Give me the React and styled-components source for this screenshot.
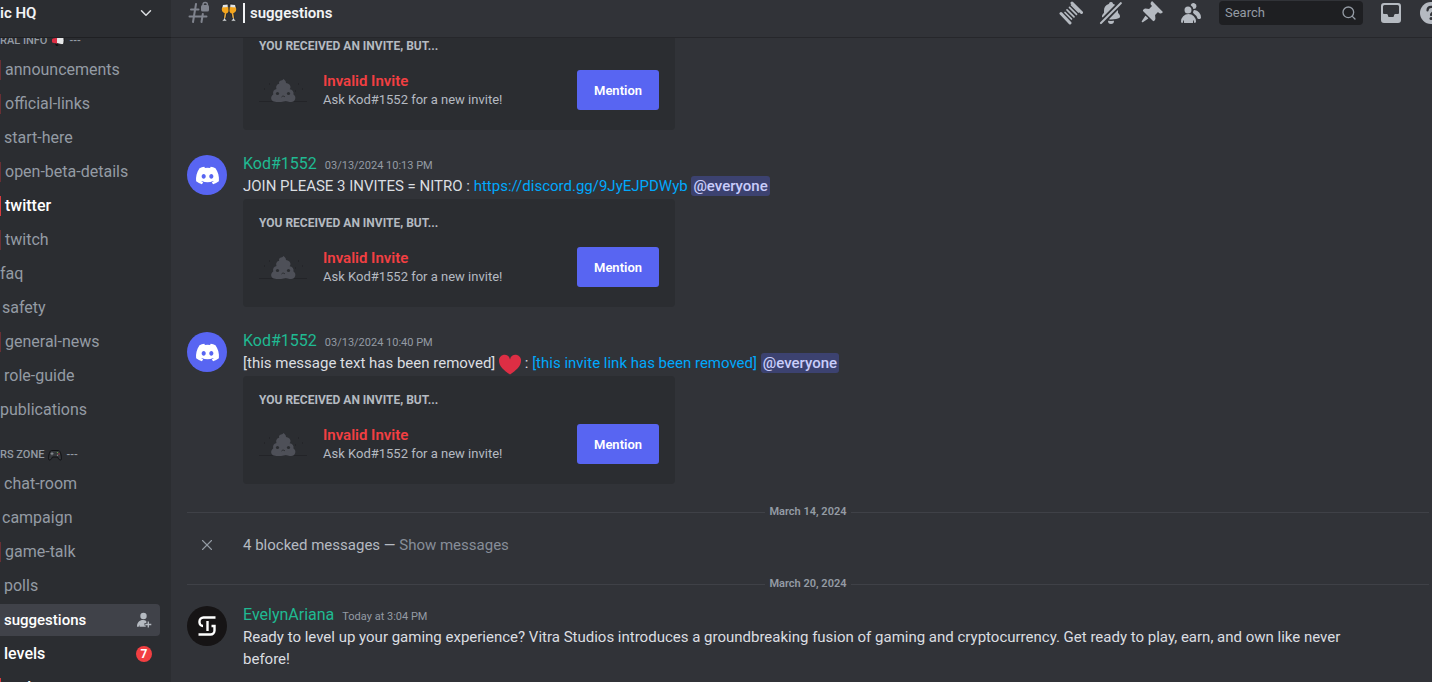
import React from 'react'
import styled, { createGlobalStyle } from 'styled-components'
import { ChevronDown, Search, X } from 'lucide-react'
import { FaDiscord } from 'react-icons/fa'

const GlobalStyle = createGlobalStyle`
    * {
        box-sizing: border-box;
    }
    body {
        margin: 0;
        background: #313338;
        color: #dbdee1;
        font-family: Roboto, 'Noto Sans', sans-serif;
        font-size: 15px;
        line-height: 22px;
        overflow: hidden;
    }
    button, input {
        font-family: inherit;
    }
`

const Page = styled.div`
    display: flex;
    height: 100vh;
    overflow: hidden;
`

const Sidebar = styled.nav`
    flex: 0 0 171px;
    display: flex;
    flex-direction: column;
    overflow: hidden;
    background: #2b2d31;
`

const ServerButton = styled.button`
    display: flex;
    align-items: center;
    justify-content: space-between;
    flex: 0 0 38px;
    padding: 0 16px 12px 0;
    border: 0;
    border-bottom: 1px solid #1f2023;
    background: transparent;
    color: #f2f3f5;
    font-size: 15px;
    font-weight: 600;
`

const ChannelScroll = styled.div`
    flex: 1;
    min-height: 0;
    overflow: hidden;
`

const Category = styled.h2`
    display: flex;
    align-items: center;
    gap: 4px;
    height: 18px;
    margin: ${(props) => (props.$first ? '-6px' : '20px')} 0 4px;
    color: #949ba4;
    font-size: 11px;
    font-weight: 500;
    white-space: nowrap;
`

const Channel = styled.a`
    display: flex;
    align-items: center;
    justify-content: space-between;
    height: 32px;
    margin: 0 11px 2px 0;
    padding-right: 8px;
    border-radius: 0 4px 4px 0;
    background: ${(props) => (props.$active ? '#404249' : 'transparent')};
    color: ${(props) => (props.$active || props.$unread ? '#ffffff' : '#949ba4')};
    font-size: ${(props) => (props.$active ? '15px' : '16px')};
    font-weight: ${(props) => (props.$active || props.$unread ? 500 : 400)};
    text-decoration: none;
`

const ChannelName = styled.span`
    padding-left: ${(props) => props.$lead}px;
    border-left: ${(props) => (props.$bar ? `1px solid ${props.$bar}` : '0')};
    line-height: 20px;
`

const Count = styled.span`
    width: 16px;
    height: 16px;
    border-radius: 8px;
    background: #f23f42;
    color: #ffffff;
    font-size: 12px;
    font-weight: 700;
    line-height: 16px;
    text-align: center;
`

const Main = styled.main`
    flex: 1;
    min-width: 0;
    display: flex;
    flex-direction: column;
    overflow: hidden;
`

const Header = styled.header`
    display: flex;
    align-items: center;
    flex: 0 0 38px;
    padding: 0 0 12px 16px;
    border-bottom: 1px solid #26272b;
`

const Title = styled.h1`
    display: flex;
    align-items: center;
    flex: 1;
    gap: 5px;
    margin: 0 0 0 9px;
    color: #f2f3f5;
    font-size: 15px;
    font-weight: 600;
`

const TitleBar = styled.span`
    width: 2px;
    height: 20px;
    background: #f2f3f5;
`

const Toolbar = styled.div`
    display: flex;
    align-items: center;
    gap: 16px;
    margin-right: -11px;
    color: #b5bac1;
`

const IconButton = styled.button`
    display: flex;
    width: 24px;
    height: 24px;
    padding: 0;
    border: 0;
    background: transparent;
    color: inherit;
`

const SearchBox = styled.label`
    display: flex;
    align-items: center;
    width: 144px;
    height: 24px;
    padding: 0 6px;
    border-radius: 4px;
    background: #1e1f22;
    color: #949ba4;
`

const SearchInput = styled.input`
    flex: 1;
    min-width: 0;
    padding: 0;
    border: 0;
    outline: 0;
    background: transparent;
    color: #dbdee1;
    font-size: 13px;
    &::placeholder {
        color: #949ba4;
        opacity: 1;
    }
`

const Messages = styled.div`
    flex: 1;
    min-height: 0;
    overflow: hidden;
    padding: 0 3px 0 16px;
`

const Message = styled.article`
    display: flex;
    gap: 16px;
    margin-top: ${(props) => props.$top}px;
    padding-right: 48px;
`

const Avatar = styled.div`
    display: flex;
    align-items: center;
    justify-content: center;
    flex: 0 0 40px;
    height: 40px;
    margin-top: 2px;
    border-radius: 50%;
    background: ${(props) => props.$color || 'transparent'};
    color: #ffffff;
`

const Body = styled.div`
    flex: 1;
    min-width: 0;
`

const Meta = styled.div`
    display: flex;
    align-items: baseline;
    gap: 8px;
`

const Author = styled.span`
    color: #1fba92;
    font-size: 16px;
`

const Time = styled.time`
    color: #949ba4;
    font-size: 11px;
    line-height: 16px;
`

const Text = styled.p`
    margin: 0;
`

const Link = styled.a`
    color: #00a8fc;
    text-decoration: none;
`

const Mention = styled.span`
    padding: 1px 2px;
    border-radius: 3px;
    background: #3c4270;
    color: #c9cdfb;
    font-weight: 500;
`

const Card = styled.section`
    max-width: 432px;
    margin-top: 2px;
    padding: 16px;
    border-radius: 4px;
    background: #2b2d31;
`

const CardHeading = styled.h3`
    margin: 0 0 12px;
    color: #b5bac1;
    font-size: 12px;
    font-weight: 700;
    line-height: 16px;
`

const CardRow = styled.div`
    display: flex;
    align-items: center;
    gap: 16px;
`

const CardText = styled.div`
    flex: 1;
    color: #b5bac1;
    font-size: 13px;
    line-height: 18px;
`

const Invalid = styled.div`
    color: #f23f42;
    font-size: 15px;
    font-weight: 600;
    line-height: 20px;
`

const MentionButton = styled.button`
    width: 82px;
    height: 40px;
    padding: 0;
    border: 0;
    border-radius: 3px;
    background: #5865f2;
    color: #ffffff;
    font-size: 13px;
    font-weight: 600;
`

const Divider = styled.div`
    display: flex;
    align-items: center;
    gap: 4px;
    margin-top: 21px;
    color: #949ba4;
    font-size: 11px;
    font-weight: 600;
    line-height: 14px;
    &::before, &::after {
        content: '';
        flex: 1;
        height: 1px;
        background: #3f4147;
    }
`

const Blocked = styled.div`
    display: flex;
    align-items: center;
    gap: 16px;
    margin-top: 15px;
    color: #b5bac1;
`

const BlockedIcon = styled.span`
    display: flex;
    justify-content: center;
    flex: 0 0 40px;
    color: #949ba4;
`

const ShowButton = styled.button`
    padding: 0;
    border: 0;
    background: transparent;
    color: #878e98;
    font-size: 15px;
`

const InlineHeart = styled.svg`
    margin: -2px 0;
    vertical-align: -6px;
`

const Megaphone = () => (
    <svg width="14" height="12" viewBox="0 0 14 12">
        <path d="M4 3.500L11 .8c1.500 0 2 2 2 4.700s-.5 4.200-2 4.200L4 8z" fill="#e6e7e8" stroke="#111214" strokeWidth=".8" />
        <path d="M1 4.800Q1 3.800 2 3.600L6 2.700v6L2 7.800Q1 7.600 1 6.800z" fill="#dd2e44" />
        <path d="M4 8.500l1 2.600h2.500L6.500 9" fill="#111214" />
    </svg>
)

const Gamepad = () => (
    <svg width="14" height="12" viewBox="0 0 14 12">
        <path d="M3.500 1.500h7c2 0 3 6 3 8 0 2-2 2-3 .2L9.500 8h-5l-1 1.700C2.500 11.500.5 11.500.5 9.500c0-2 1-8 3-8z" fill="#34373b" stroke="#101113" />
        <path d="M4 3.200v3M2.500 4.700h3" stroke="#8b9096" />
        <circle cx="9.500" cy="3.600" r=".7" fill="#77b255" />
        <circle cx="11" cy="5" r=".7" fill="#be3b45" />
        <circle cx="9.500" cy="6.200" r=".7" fill="#8b9096" />
    </svg>
)

const Glasses = () => (
    <svg width="18" height="20" viewBox="0 0 18 20">
        <path d="M2.500 1.500L8 1l.5 6c0 2-1 3-2.200 3.400L5.500 16l2 2.200h-6l2.300-2.400L4.700 10C3 9.500 1.500 8 1.700 6z" fill="#dfe3e6" stroke="#17181a" strokeWidth=".8" />
        <path d="M2 4.500L8.200 4l.3 3.500c0 1.800-1 2.800-2.500 3L5.200 15h-1l.5-5C3 9.500 1.800 8.500 1.800 6.500z" fill="#f4a51c" />
        <path d="M15.500 1.500L10 1l-.5 6c0 2 1 3 2.200 3.400l.8 5.600-2 2.200h6l-2.300-2.400-.9-5.800c1.700-.5 3.200-2 3-4z" fill="#dfe3e6" stroke="#17181a" strokeWidth=".8" />
        <path d="M16 4.500L9.800 4l-.3 3.500c0 1.800 1 2.800 2.500 3l.8 4.500h1l-.5-5c1.700-.5 2.900-1.500 2.900-3.500z" fill="#f4a51c" />
    </svg>
)

const HashLock = () => (
    <svg width="24" height="24" viewBox="0 0 24 24" fill="none" stroke="#80848e" strokeWidth="2" strokeLinecap="round">
        <path d="M9 3L6 21M15.800 13L14.500 21M4 8.500h7.500M2.500 15.500h17" />
        <path d="M16 5V3.800a2.200 2.200 0 0 1 4.400 0V5" strokeWidth="1.500" />
        <rect x="14" y="4" width="8" height="6.500" rx="1.500" fill="#80848e" stroke="none" />
    </svg>
)

const ThreadsIcon = () => (
    <svg width="24" height="24" viewBox="0 0 24 24" fill="none" stroke="currentColor" strokeLinecap="round">
        <path d="M2 12.500L11 22M13 2l9.500 9.500" strokeWidth="3" />
        <path d="M6 11.500l6.500 6.500M8 8.800l7 7M10.500 6.300l7 7M12.500 4l7 7" strokeWidth="1.700" />
    </svg>
)

const BellOffIcon = () => (
    <svg width="24" height="24" viewBox="0 0 24 24" fill="currentColor">
        <path d="M1.3 21.3a1 1 0 1 0 1.4 1.4l20-20a1 1 0 0 0-1.4-1.4l-20 20ZM3.13 16.13c.11.27.46.28.66.08L15.73 4.27a.47.47 0 0 0-.07-.74 6.97 6.97 0 0 0-1.35-.64.62.62 0 0 1-.38-.43 2 2 0 0 0-3.86 0 .62.62 0 0 1-.38.43A7 7 0 0 0 5 9.5v2.09a.5.5 0 0 1-.13.33l-1.1 1.22A3 3 0 0 0 3 15.15v.28c0 .24.04.48.13.7ZM18.64 9.36c.13-.13.36-.05.36.14v2.09c0 .12.05.24.13.33l1.1 1.22a3 3 0 0 1 .77 2.01v.28c0 .67-.34 1.29-.95 1.56-1.31.6-4 1.51-8.05 1.51-.46 0-.9-.01-1.33-.03a.48.48 0 0 1-.3-.83l8.27-8.28ZM9.18 19.84A.16.16 0 0 0 9 20a3 3 0 1 0 6 0c0-.1-.09-.17-.18-.16a24.84 24.84 0 0 1-5.64 0Z" />
    </svg>
)

const PinIcon = () => (
    <svg width="24" height="24" viewBox="0 0 24 24" fill="currentColor">
        <path d="M19.38 11.38a3 3 0 0 0 4.24 0l.03-.03a.5.5 0 0 0 0-.7L13.35.35a.5.5 0 0 0-.7 0l-.03.03a3 3 0 0 0 0 4.24L13 5l-2.92 2.92-3.65-.34a2 2 0 0 0-1.6.58l-.62.63a1 1 0 0 0 0 1.42l9.58 9.58a1 1 0 0 0 1.42 0l.63-.63a2 2 0 0 0 .58-1.6l-.34-3.64L19 11l.38.38ZM9.07 17.07a.5.5 0 0 1-.08.77l-5.15 3.43a.5.5 0 0 1-.63-.06l-.42-.42a.5.5 0 0 1-.06-.63L6.16 15a.5.5 0 0 1 .77-.08l2.14 2.14Z" />
    </svg>
)

const MembersIcon = () => (
    <svg width="24" height="24" viewBox="0 0 24 24" fill="currentColor">
        <path d="M14.5 8a3 3 0 1 0-2.7-4.3c-.2.4.06.86.44 1.12a5 5 0 0 1 2.14 3.08c.01.06.06.1.12.1ZM18.44 17.27c.15.43.54.73 1 .73h1.06c.83 0 1.5-.67 1.5-1.5a7.5 7.5 0 0 0-6.5-7.43c-.55-.08-.99.38-1.1.92-.06.3-.15.6-.26.87-.23.58-.05 1.3.47 1.63a9.53 9.53 0 0 1 3.83 4.78ZM12.5 9a3.5 3.5 0 1 1-7 0 3.5 3.5 0 0 1 7 0ZM2 20.5a7.5 7.5 0 0 1 15 0c0 .83-.67 1.5-1.5 1.5a.2.2 0 0 1-.2-.16c-.2-.96-.56-1.87-.88-2.54-.1-.23-.42-.15-.42.1v2.1a.5.5 0 0 1-.5.5h-8a.5.5 0 0 1-.5-.5v-2.1c0-.25-.31-.33-.42-.1-.32.67-.67 1.58-.88 2.54a.2.2 0 0 1-.2.16A1.5 1.5 0 0 1 2 20.5Z" />
    </svg>
)

const InboxIcon = () => (
    <svg width="24" height="24" viewBox="0 0 24 24" fill="currentColor">
        <path fillRule="evenodd" d="M5 2a3 3 0 0 0-3 3v14a3 3 0 0 0 3 3h14a3 3 0 0 0 3-3V5a3 3 0 0 0-3-3H5ZM4 5.500A1.500 1.500 0 0 1 5.500 4h13A1.500 1.500 0 0 1 20 5.500v6.500a1 1 0 0 1-1 1h-2.500c-.8 0-1.500.7-1.500 1.500 0 1-.7 1.500-1.500 1.500h-3C9.700 16 9 15.500 9 14.500 9 13.700 8.300 13 7.500 13H5a1 1 0 0 1-1-1V5.500Z" />
    </svg>
)

const HelpIcon = () => (
    <svg width="24" height="24" viewBox="0 0 24 24">
        <circle cx="12" cy="12" r="11" fill="currentColor" />
        <path d="M8.500 9.500c0-5 7-4.500 7-.5 0 2.500-3.500 2.500-3.500 5" fill="none" stroke="#313338" strokeWidth="2.200" strokeLinecap="round" />
        <circle cx="12" cy="17.500" r="1.500" fill="#313338" />
    </svg>
)

const AddPerson = () => (
    <svg width="16" height="16" viewBox="0 0 16 16" fill="#b5bac1">
        <circle cx="7.500" cy="4" r="3.200" />
        <path d="M1 14.500c0-4 2.500-6.500 6-6.500 1.300 0 2.400.3 3.300.9V11H8.500v2.500h1.200v1.200H3.500v-2l-.8 2H1z" />
        <path d="M12.300 9.500v6M9.300 12.500h6" stroke="#b5bac1" strokeWidth="1.300" />
    </svg>
)

const Poop = () => (
    <svg width="48" height="48" viewBox="0 0 48 48">
        <path d="M0 35.500h48" stroke="#232428" />
        <path d="M10 18h1M5 23h1M39 18h1M43 23h1M36 25h1" stroke="#1e1f22" />
        <path d="M22 14.500c1.500 0 2-.8 2.300-1.500 1.500 1 2.800 2 2.700 4 2.500.5 4.500 1.500 4.500 4 0 1-.3 1.600-.8 2.200 2.800.3 4.300 2.300 3.800 5.300 1.700 1 2.200 3 1.700 4.500-.5 2-2 3-4 3-2.500 0-3-.8-5.500-.8s-4 1-7 .8c-3 0-7 0-7.500-3.200-.3-2 .7-3.500 2-4.300-.5-3 .5-5 3.300-5.500-1-3 .7-4.700 2.700-5.200-.5-1.500 0-2.800 1.800-3.300z" fill="#4e5058" />
        <circle cx="18.500" cy="27.500" r="1.600" fill="#2b2d31" />
        <circle cx="29.500" cy="27.500" r="1.600" fill="#2b2d31" />
        <path d="M22.500 31c1-1.200 2.500-1.200 3.500 0" fill="none" stroke="#2b2d31" />
    </svg>
)

const StudioLogo = () => (
    <svg width="40" height="40" viewBox="0 0 40 40" fill="none" stroke="#ffffff" strokeWidth="2.400">
        <circle cx="20" cy="20" r="20" fill="#161415" stroke="none" />
        <path d="M28.500 11.500H16.500a4 4 0 0 0-4 4v1a3.500 3.500 0 0 0 3.500 3.500" />
        <path d="M11.500 28.500h12a4 4 0 0 0 4-4V20h-3" />
        <path d="M20.500 15v10" />
    </svg>
)

const DIM = '#682f34'
const RED = '#d83a3e'

const infoChannels = [
    { name: 'announcements', lead: 4, bar: DIM },
    { name: 'official-links', lead: 4, bar: DIM },
    { name: 'start-here', lead: 4 },
    { name: 'open-beta-details', lead: 4, bar: DIM },
    { name: 'twitter', lead: 4, bar: RED, unread: true },
    { name: 'twitch', lead: 4, bar: DIM },
    { name: 'faq', lead: 0 },
    { name: 'safety', lead: 2 },
    { name: 'general-news', lead: 4, bar: DIM },
    { name: 'role-guide', lead: 4 },
    { name: 'publications', lead: 0 },
]

const zoneChannels = [
    { name: 'chat-room', lead: 4 },
    { name: 'campaign', lead: 2 },
    { name: 'game-talk', lead: 4, bar: DIM },
    { name: 'polls', lead: 4 },
    { name: 'suggestions', lead: 4, active: true },
    { name: 'levels', lead: 4, unread: true, count: 7 },
    { name: 'tasks', lead: 4, bar: RED, unread: true },
]

function ChannelList({ channels }) {
    return channels.map((channel) => (
        <Channel key={channel.name} href="#" $active={channel.active} $unread={channel.unread}>
            <ChannelName $lead={channel.lead} $bar={channel.bar}>{channel.name}</ChannelName>
            {channel.active && <AddPerson />}
            {channel.count && <Count>{channel.count}</Count>}
        </Channel>
    ))
}

function InviteCard() {
    return (
        <Card>
            <CardHeading>YOU RECEIVED AN INVITE, BUT...</CardHeading>
            <CardRow>
                <Poop />
                <CardText>
                    <Invalid>Invalid Invite</Invalid>
                    Ask Kod#1552 for a new invite!
                </CardText>
                <MentionButton type="button">Mention</MentionButton>
            </CardRow>
        </Card>
    )
}

function KodMessage({ time, children }) {
    return (
        <Message $top={23}>
            <Avatar $color="#5865f2"><FaDiscord size={25} /></Avatar>
            <Body>
                <Meta>
                    <Author>Kod#1552</Author>
                    <Time>{time}</Time>
                </Meta>
                <Text>{children} <Mention>@everyone</Mention></Text>
                <InviteCard />
            </Body>
        </Message>
    )
}

function App() {
    return (
        <Page>
            <GlobalStyle />
            <Sidebar>
                <ServerButton type="button">
                    ic HQ
                    <ChevronDown size={18} color="#dbdee1" />
                </ServerButton>
                <ChannelScroll>
                    <Category $first>RAL INFO <Megaphone />---</Category>
                    <ChannelList channels={infoChannels} />
                    <Category>RS ZONE <Gamepad />---</Category>
                    <ChannelList channels={zoneChannels} />
                </ChannelScroll>
            </Sidebar>
            <Main>
                <Header>
                    <HashLock />
                    <Title><Glasses /><TitleBar />suggestions</Title>
                    <Toolbar>
                        <IconButton type="button" aria-label="Threads"><ThreadsIcon /></IconButton>
                        <IconButton type="button" aria-label="Notifications"><BellOffIcon /></IconButton>
                        <IconButton type="button" aria-label="Pinned"><PinIcon /></IconButton>
                        <IconButton type="button" aria-label="Members"><MembersIcon /></IconButton>
                        <SearchBox>
                            <SearchInput type="text" placeholder="Search" aria-label="Search" />
                            <Search size={16} />
                        </SearchBox>
                        <IconButton type="button" aria-label="Inbox"><InboxIcon /></IconButton>
                        <IconButton type="button" aria-label="Help"><HelpIcon /></IconButton>
                    </Toolbar>
                </Header>
                <Messages>
                    <Message $top={-18}>
                        <Avatar />
                        <Body><InviteCard /></Body>
                    </Message>
                    <KodMessage time="03/13/2024 10:13 PM">
                        JOIN PLEASE 3 INVITES = NITRO : <Link href="#">https://discord.gg/9JyEJPDWyb</Link>
                    </KodMessage>
                    <KodMessage time="03/13/2024 10:40 PM">
                        [this message text has been removed]{' '}
                        <InlineHeart width="22" height="22" viewBox="0 0 22 22">
                            <path d="M11 20.500C5 16.500 0 12 0 7a5.500 5.500 0 0 1 11-1.500A5.500 5.500 0 0 1 22 7c0 5-5 9.500-11 13.500z" fill="#dd2e44" />
                        </InlineHeart>
                        {' '}: <Link href="#">[this invite link has been removed]</Link>
                    </KodMessage>
                    <Divider>March 14, 2024</Divider>
                    <Blocked>
                        <BlockedIcon><X size={18} strokeWidth={1.5} /></BlockedIcon>
                        <span>4 blocked messages — <ShowButton type="button">Show messages</ShowButton></span>
                    </Blocked>
                    <Divider>March 20, 2024</Divider>
                    <Message $top={13}>
                        <Avatar><StudioLogo /></Avatar>
                        <Body>
                            <Meta>
                                <Author>EvelynAriana</Author>
                                <Time>Today at 3:04 PM</Time>
                            </Meta>
                            <Text>
                                Ready to level up your gaming experience? Vitra Studios introduces a groundbreaking fusion of gaming and cryptocurrency. Get ready to play, earn, and own like never before!
                            </Text>
                        </Body>
                    </Message>
                </Messages>
            </Main>
        </Page>
    )
}

export default App
